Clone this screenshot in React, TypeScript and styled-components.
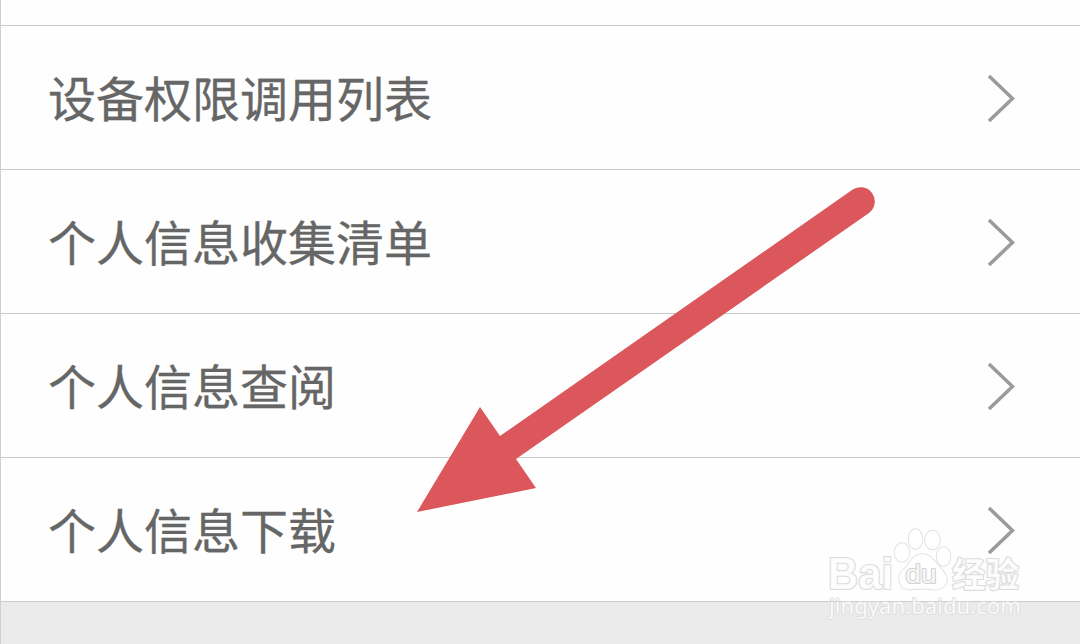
import styled, { createGlobalStyle } from "styled-components"

const GlobalStyle = createGlobalStyle`
    body {
        margin: 0;
        background-color: #ebebeb;
        font-family: "Liberation Sans", "Noto Sans CJK SC", sans-serif;
    }
`

const Page = styled.main`
    position: relative;
    box-sizing: border-box;
    width: 1080px;
    height: 644px;
    overflow: hidden;
    border-left: 1px solid #d0d0d0;
`

const TopGap = styled.div`
    height: 25px;
    background-color: #fefefe;
`

const List = styled.ul`
    margin: 0;
    padding: 0;
    list-style: none;
    border-bottom: 1px solid #cdcdcd;
`

const Row = styled.li`
    display: flex;
    align-items: center;
    justify-content: space-between;
    box-sizing: border-box;
    height: 144px;
    padding: 0 65px 0 47px;
    border-top: 1px solid #cbcbcb;
    background-color: #fefefe;
`

const Label = styled.span`
    padding-bottom: 3px;
    font-family: "Noto Sans CJK SC", sans-serif;
    font-size: 48px;
    line-height: 72px;
    color: #666;
    -webkit-text-stroke: 0.3px #666;
`

const Chevron = styled.svg`
    width: 28px;
    height: 50px;
    fill: none;
    stroke: #9b9b9b;
    stroke-width: 3.6;
`

const Arrow = styled.svg`
    position: absolute;
    top: 180px;
    left: 409px;
    width: 480px;
    height: 340px;
    fill: #db575b;
`

const Watermark = styled.svg`
    position: absolute;
    top: 520px;
    left: 819px;
    width: 210px;
    height: 110px;
    fill: #fff;
    fill-opacity: 0.85;
    stroke: #dcdcdc;
    stroke-width: 1.4;
    stroke-linejoin: round;
    paint-order: stroke;
`

const items = ["设备权限调用列表", "个人信息收集清单", "个人信息查阅", "个人信息下载"]

interface RowProps {
    title: string;
}

const ListRow = ({title}: RowProps): JSX.Element => {
    return(
        <Row>
            <Label>{title}</Label>
            <Chevron viewBox="0 0 28 50">
                <path d="M2 3L25.5 25.5L2 48" />
            </Chevron>
        </Row>
    )
}

const BaiduMark = (): JSX.Element => {
    return(
        <Watermark viewBox="820 520 210 110">
            <text x="828" y="588.5" fontSize="44" fontWeight="bold" textLength="65" lengthAdjust="spacingAndGlyphs" strokeWidth="2.2">Bai</text>
            <ellipse cx="902" cy="552.5" rx="7.5" ry="9.5" />
            <ellipse cx="915.5" cy="539" rx="7" ry="10" />
            <ellipse cx="932.5" cy="540" rx="7.5" ry="9.5" />
            <ellipse cx="943.5" cy="556.5" rx="7" ry="9.5" />
            <path d="M922 554C915 554 911 560 907 566C902 571 898 574 899 580C900 587 905 590 911 589.5C918 588.5 926 588.5 933 589.5C940 590.5 946 587 947 580C947 574 943 571 938 565C933 559 930 554 922 554Z" />
            <text x="905.5" y="583" fontSize="26" textLength="31" lengthAdjust="spacingAndGlyphs" strokeWidth="2.2" stroke="#d3d3d3">du</text>
            <text x="952" y="586.5" fontFamily="Noto Sans CJK SC" fontSize="34" fontWeight="bold" textLength="67" lengthAdjust="spacingAndGlyphs" strokeWidth="2.2">经验</text>
            <text x="829" y="613.5" fontFamily="Noto Sans" fontSize="21" textLength="192" lengthAdjust="spacingAndGlyphs" strokeWidth="1.6">jingyan.baidu.com</text>
        </Watermark>
    )
}

const App = (): JSX.Element => {
    return(
        <>
            <GlobalStyle />
            <Page>
                <TopGap />
                <List>
                    {items.map((title) => <ListRow key={title} title={title} />)}
                </List>
                <Arrow viewBox="410 180 480 340">
                    <path d="M417 512L480 407L500 436L852 190A14 14 0 0 1 869 213L516 459L536 488Z" />
                </Arrow>
                <BaiduMark />
            </Page>
        </>
    )
}

export default App
